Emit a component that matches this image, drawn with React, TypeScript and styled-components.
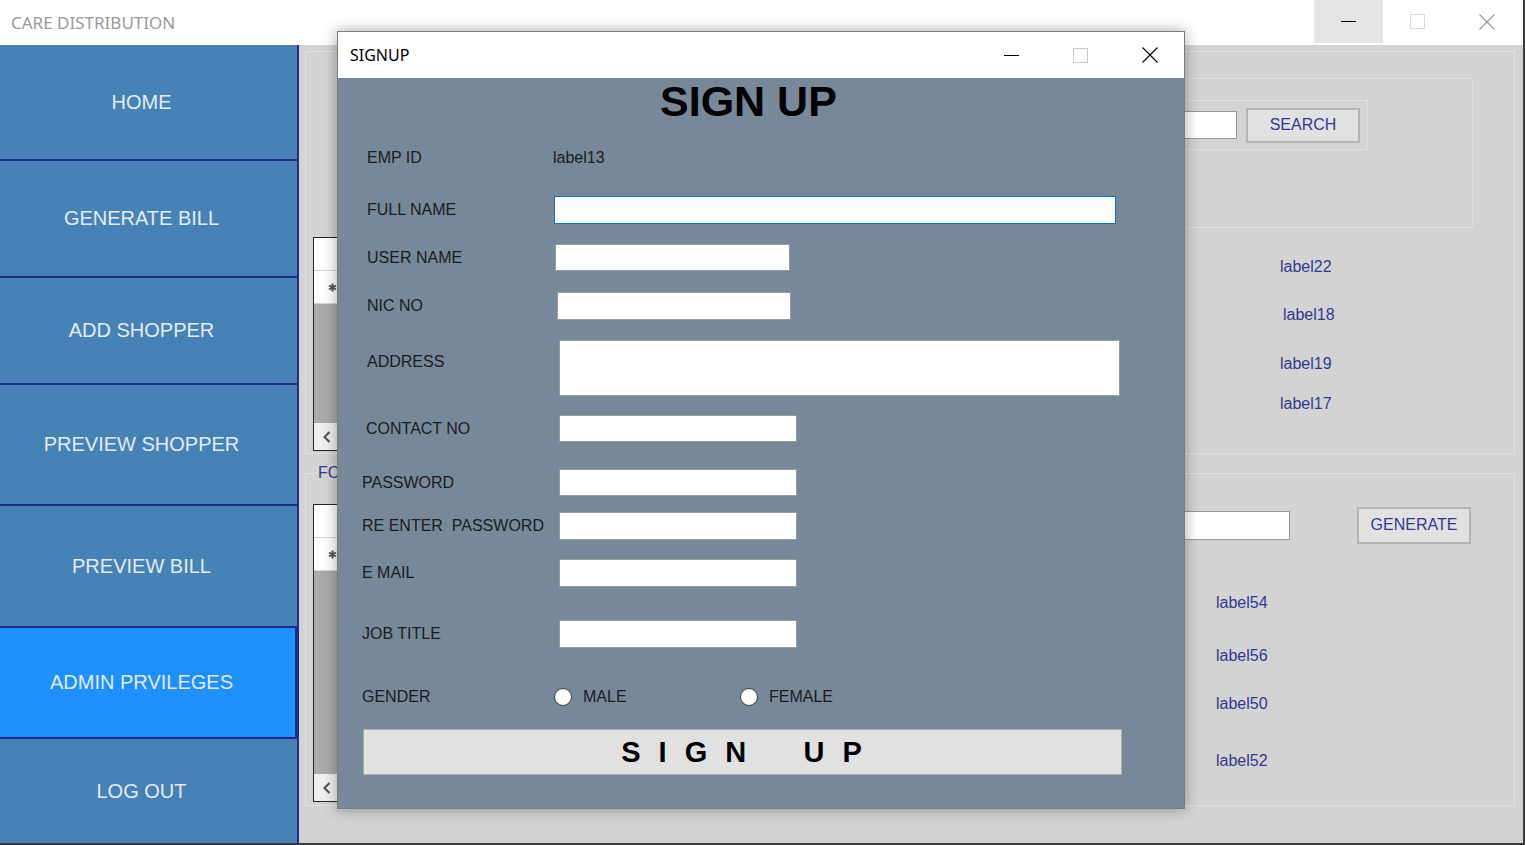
import React from "react";
import styled, { createGlobalStyle } from "styled-components";

const Global = createGlobalStyle`
  html, body { margin: 0; padding: 0; background: #3a3a3a; }
  body { width: 1525px; height: 845px; overflow: hidden; font-family: "Liberation Sans", Arial, sans-serif; }
  * { box-sizing: border-box; }
`;

const NAVY = "#1f2c8a";

const Window = styled.div`
  position: relative;
  width: 1523px;
  height: 843px;
  background: #d3d3d3;
  display: flex;
  flex-direction: column;
`;

const TitleBar = styled.div`
  height: 45px;
  flex: none;
  background: #ffffff;
  display: flex;
  align-items: flex-start;
  padding-right: 2px;
`;

const AppTitle = styled.div`
  flex: 1;
  height: 45px;
  padding-left: 11px;
  display: flex;
  align-items: center;
  font-family: "Noto Sans", "Open Sans", sans-serif;
  font-size: 17px;
  color: #9a9a9a;
`;

const CaptionButton = styled.div<{ $hover?: boolean; $h: number }>`
  width: 69px;
  height: ${(p) => p.$h}px;
  display: flex;
  align-items: center;
  justify-content: center;
  background: ${(p) => (p.$hover ? "#e5e5e5" : "transparent")};
`;

const Body = styled.div`
  flex: 1;
  display: flex;
  min-height: 0;
`;

const Sidebar = styled.nav`
  width: 299px;
  flex: none;
  background: #4682b4;
  border-right: 2px solid ${NAVY};
  display: flex;
  flex-direction: column;
`;

const NavButton = styled.div<{ $h?: number; $active?: boolean }>`
  ${(p) => (p.$h ? `height: ${p.$h}px; flex: none;` : "flex: 1;")}
  background: ${(p) => (p.$active ? "#1e90ff" : "#4682b4")};
  border-bottom: ${(p) => (p.$h ? `2px solid ${NAVY}` : "none")};
  border-right: ${(p) => (p.$active ? `2px solid ${NAVY}` : "none")};
  display: flex;
  align-items: center;
  justify-content: center;
  color: #e2ebf5;
  font-size: 20px;
  padding-right: ${(p) => (p.$active ? "12px" : "14px")};
`;

const Content = styled.main`
  flex: 1;
  padding: 6px 8px 0 6px;
  display: flex;
  flex-direction: column;
  gap: 10px;
`;

const GroupBox = styled.div`
  height: 403px;
  border: 1px solid #e1e1e1;
  display: flex;
  align-items: flex-start;
`;

const FieldBox = styled.fieldset`
  margin: 0;
  padding: 0;
  height: 342px;
  border: 1px solid #e1e1e1;
  min-width: 0;
`;

const Legend = styled.legend`
  margin-left: 11px;
  padding: 0 1px;
  font-size: 16px;
  line-height: 18px;
  color: #35378f;
`;

const FieldInner = styled.div`
  display: flex;
  align-items: flex-start;
`;

const LeftCol = styled.div<{ $top: number }>`
  width: 560px;
  flex: none;
  margin-left: 7px;
  margin-top: ${(p) => p.$top}px;
`;

const RightCol = styled.div`
  flex: 1;
  display: flex;
  flex-direction: column;
  align-items: flex-start;
`;

const Grid = styled.div<{ $h: number }>`
  height: ${(p) => p.$h}px;
  border: 1px solid #262626;
  background: #ababab;
  display: flex;
  flex-direction: column;
`;

const GridRow = styled.div`
  height: 33px;
  flex: none;
  display: flex;
`;

const GridCell = styled.div<{ $w: number }>`
  width: ${(p) => p.$w}px;
  background: #ffffff;
  border-right: 1px solid #d6d6d6;
  border-bottom: 1px solid #d6d6d6;
  display: flex;
  align-items: center;
  padding-left: 14px;
`;

const GridFill = styled.div`
  flex: 1;
`;

const HScroll = styled.div`
  height: 27px;
  flex: none;
  background: #f0f0f0;
  border-top: 1px solid #f0f0f0;
  display: flex;
  align-items: center;
  padding-left: 9px;
`;

const SearchBox = styled.div`
  margin-top: 26px;
  margin-left: 127px;
  width: 473px;
  height: 150px;
  border: 1px solid #dfdfdf;
`;

const SearchSub = styled.div`
  margin-top: 21px;
  margin-left: 19px;
  width: 348px;
  height: 50px;
  border: 1px solid #dfdfdf;
  display: flex;
  align-items: center;
`;

const TextBox = styled.div<{ $w: number; $h: number; $ml?: number; $focus?: boolean }>`
  width: ${(p) => p.$w}px;
  height: ${(p) => p.$h}px;
  margin-left: ${(p) => p.$ml ?? 0}px;
  flex: none;
  background: #ffffff;
  border: 1px solid ${(p) => (p.$focus ? "#0078d7" : "#9a9a9a")};
`;

const WinButton = styled.div<{ $ml: number; $h: number }>`
  width: 114px;
  height: ${(p) => p.$h}px;
  margin-left: ${(p) => p.$ml}px;
  flex: none;
  background: #e1e1e1;
  border: 2px solid #b4b4b4;
  display: flex;
  align-items: center;
  justify-content: center;
  font-size: 16px;
  color: #35378f;
`;

const ActionRow = styled.div`
  margin-top: 25px;
  height: 36px;
  display: flex;
  align-items: center;
`;

const InfoLabel = styled.div<{ $top: number; $left: number }>`
  margin-top: ${(p) => p.$top}px;
  margin-left: ${(p) => p.$left}px;
  font-size: 16px;
  line-height: 18px;
  color: #35378f;
`;

/* ---------- dialog ---------- */

const Dialog = styled.section`
  position: absolute;
  left: 337px;
  top: 31px;
  width: 848px;
  height: 778px;
  border: 1px solid #7c7c7c;
  background: #778899;
  box-shadow: 0 0 14px rgba(0, 0, 0, 0.35);
  display: flex;
  flex-direction: column;
`;

const DialogTitleBar = styled.div`
  height: 46px;
  flex: none;
  background: #ffffff;
  display: flex;
  align-items: center;
`;

const DialogTitle = styled.div`
  flex: 1;
  padding-left: 12px;
  font-family: "Noto Sans", "Open Sans", sans-serif;
  font-size: 16px;
  color: #000;
`;

const DialogBody = styled.div`
  flex: 1;
  display: flex;
  flex-direction: column;
`;

const Heading = styled.h1`
  margin: 0;
  padding-left: 322px;
  font-size: 43px;
  line-height: 46px;
  font-weight: bold;
  color: #000;
`;

const FormRow = styled.div<{ $top: number; $indent: number; $h: number; $alignTop?: boolean }>`
  margin-top: ${(p) => p.$top}px;
  padding-left: ${(p) => p.$indent}px;
  height: ${(p) => p.$h}px;
  display: flex;
  align-items: ${(p) => (p.$alignTop ? "flex-start" : "center")};
`;

const FieldLabel = styled.div<{ $w: number; $pt?: number }>`
  width: ${(p) => p.$w}px;
  flex: none;
  padding-top: ${(p) => p.$pt ?? 0}px;
  font-size: 16px;
  line-height: 18px;
  color: #1c1c1c;
  white-space: pre;
`;

const FieldValue = styled.div`
  font-size: 16px;
  line-height: 18px;
  color: #1c1c1c;
`;

const RadioOption = styled.label<{ $w?: number }>`
  display: flex;
  align-items: center;
  gap: 11px;
  ${(p) => (p.$w ? `width: ${p.$w}px;` : "")}
  font-size: 16px;
  line-height: 18px;
  color: #1c1c1c;
`;

const RadioDot = styled.span`
  width: 18px;
  height: 18px;
  border-radius: 50%;
  background: #ffffff;
  border: 1px solid #3a3a3a;
  flex: none;
`;

const SignUpButton = styled.div`
  margin-top: 18px;
  margin-left: 25px;
  width: 759px;
  height: 46px;
  background: #e1e1e1;
  border: 1px solid #adadad;
  display: flex;
  align-items: center;
  justify-content: center;
  padding-left: 3px;
  font-size: 29px;
  font-weight: bold;
  letter-spacing: 5px;
  color: #000;
  white-space: pre;
`;

const MinIcon = ({ color = "#000" }: { color?: string }) => (
  <svg width="15" height="15" viewBox="0 0 15 15">
    <line x1="0" y1="7.5" x2="15" y2="7.5" stroke={color} strokeWidth="1" />
  </svg>
);
const MaxIcon = ({ color }: { color: string }) => (
  <svg width="15" height="15" viewBox="0 0 15 15">
    <rect x="0.5" y="0.5" width="14" height="14" fill="none" stroke={color} strokeWidth="1" />
  </svg>
);
const CloseIcon = ({ color }: { color: string }) => (
  <svg width="16" height="16" viewBox="0 0 16 16">
    <path d="M0.5 0.5 L15.5 15.5 M15.5 0.5 L0.5 15.5" stroke={color} strokeWidth="1.1" fill="none" />
  </svg>
);
const Chevron = () => (
  <svg width="8" height="12" viewBox="0 0 8 12">
    <polyline points="6.5,1 1.5,6 6.5,11" fill="none" stroke="#555" strokeWidth="2.2" />
  </svg>
);
const Star = () => (
  <svg width="9" height="9" viewBox="0 0 9 9">
    <path d="M4.5 0.5 V8.5 M1 2.5 L8 6.5 M8 2.5 L1 6.5" stroke="#555" strokeWidth="2" />
  </svg>
);

const DataGrid = ({ h }: { h: number }) => (
  <Grid $h={h}>
    <GridRow>
      <GridCell $w={41} />
      <GridCell $w={120} />
    </GridRow>
    <GridRow>
      <GridCell $w={41}>
        <Star />
      </GridCell>
      <GridCell $w={120} />
    </GridRow>
    <GridFill />
    <HScroll>
      <Chevron />
    </HScroll>
  </Grid>
);

const NAV = [
  { label: "HOME", h: 116 },
  { label: "GENERATE BILL", h: 117 },
  { label: "ADD SHOPPER", h: 107 },
  { label: "PREVIEW SHOPPER", h: 121 },
  { label: "PREVIEW BILL", h: 122 },
  { label: "ADMIN PRVILEGES", h: 111, active: true },
  { label: "LOG OUT", h: 0 },
];

const FIELDS = [
  { label: "FULL NAME", top: 24, indent: 29, lw: 187, w: 562, h: 28, focus: true },
  { label: "USER NAME", top: 20, indent: 29, lw: 188, w: 235, h: 27 },
  { label: "NIC NO", top: 21, indent: 29, lw: 190, w: 234, h: 28 },
  { label: "ADDRESS", top: 20, indent: 29, lw: 192, w: 561, h: 56, alignTop: true },
  { label: "CONTACT NO", top: 19, indent: 28, lw: 193, w: 238, h: 27 },
  { label: "PASSWORD", top: 27, indent: 24, lw: 197, w: 238, h: 27 },
  { label: "RE ENTER  PASSWORD", top: 16, indent: 24, lw: 197, w: 238, h: 28 },
  { label: "E MAIL", top: 19, indent: 24, lw: 197, w: 238, h: 28 },
  { label: "JOB TITLE", top: 33, indent: 24, lw: 197, w: 238, h: 28 },
];

export default function App() {
  return (
    <>
      <Global />
      <Window>
        <TitleBar>
          <AppTitle>CARE DISTRIBUTION</AppTitle>
          <CaptionButton $hover $h={43}>
            <MinIcon />
          </CaptionButton>
          <CaptionButton $h={43}>
            <MaxIcon color="#dadada" />
          </CaptionButton>
          <CaptionButton $h={43}>
            <CloseIcon color="#999" />
          </CaptionButton>
        </TitleBar>
        <Body>
          <Sidebar>
            {NAV.map((n) => (
              <NavButton key={n.label} $h={n.h || undefined} $active={n.active}>
                {n.label}
              </NavButton>
            ))}
          </Sidebar>
          <Content>
            <GroupBox>
              <LeftCol $top={185}>
                <DataGrid h={214} />
              </LeftCol>
              <RightCol>
                <SearchBox>
                  <SearchSub>
                    <TextBox $w={207} $h={28} $ml={9} />
                    <WinButton $ml={9} $h={35}>
                      SEARCH
                    </WinButton>
                  </SearchSub>
                </SearchBox>
                <InfoLabel $top={30} $left={407}>label22</InfoLabel>
                <InfoLabel $top={30} $left={410}>label18</InfoLabel>
                <InfoLabel $top={31} $left={407}>label19</InfoLabel>
                <InfoLabel $top={22} $left={407}>label17</InfoLabel>
              </RightCol>
            </GroupBox>
            <FieldBox>
              <Legend>FO</Legend>
              <FieldInner>
                <LeftCol $top={22}>
                  <DataGrid h={298} />
                </LeftCol>
                <RightCol>
                  <ActionRow>
                    <TextBox $w={290} $h={29} $ml={127} />
                    <WinButton $ml={67} $h={37}>
                      GENERATE
                    </WinButton>
                  </ActionRow>
                  <InfoLabel $top={51} $left={343}>label54</InfoLabel>
                  <InfoLabel $top={35} $left={343}>label56</InfoLabel>
                  <InfoLabel $top={30} $left={343}>label50</InfoLabel>
                  <InfoLabel $top={39} $left={343}>label52</InfoLabel>
                </RightCol>
              </FieldInner>
            </FieldBox>
          </Content>
        </Body>

        <Dialog>
          <DialogTitleBar>
            <DialogTitle>SIGNUP</DialogTitle>
            <CaptionButton $h={46}>
              <MinIcon />
            </CaptionButton>
            <CaptionButton $h={46}>
              <MaxIcon color="#c8c8c8" />
            </CaptionButton>
            <CaptionButton $h={46}>
              <CloseIcon color="#000" />
            </CaptionButton>
          </DialogTitleBar>
          <DialogBody>
            <Heading>SIGN UP</Heading>
            <FormRow $top={20} $indent={29} $h={28}>
              <FieldLabel $w={186}>EMP ID</FieldLabel>
              <FieldValue>label13</FieldValue>
            </FormRow>
            {FIELDS.map((f) => (
              <FormRow key={f.label} $top={f.top} $indent={f.indent} $h={f.h} $alignTop={f.alignTop}>
                <FieldLabel $w={f.lw} $pt={f.alignTop ? 13 : 0}>
                  {f.label}
                </FieldLabel>
                <TextBox $w={f.w} $h={f.h} $focus={f.focus} />
              </FormRow>
            ))}
            <FormRow $top={35} $indent={24} $h={28}>
              <FieldLabel $w={192}>GENDER</FieldLabel>
              <RadioOption $w={186}>
                <RadioDot />
                MALE
              </RadioOption>
              <RadioOption>
                <RadioDot />
                FEMALE
              </RadioOption>
            </FormRow>
            <SignUpButton>{"S I G N    U P"}</SignUpButton>
          </DialogBody>
        </Dialog>
      </Window>
    </>
  );
}
